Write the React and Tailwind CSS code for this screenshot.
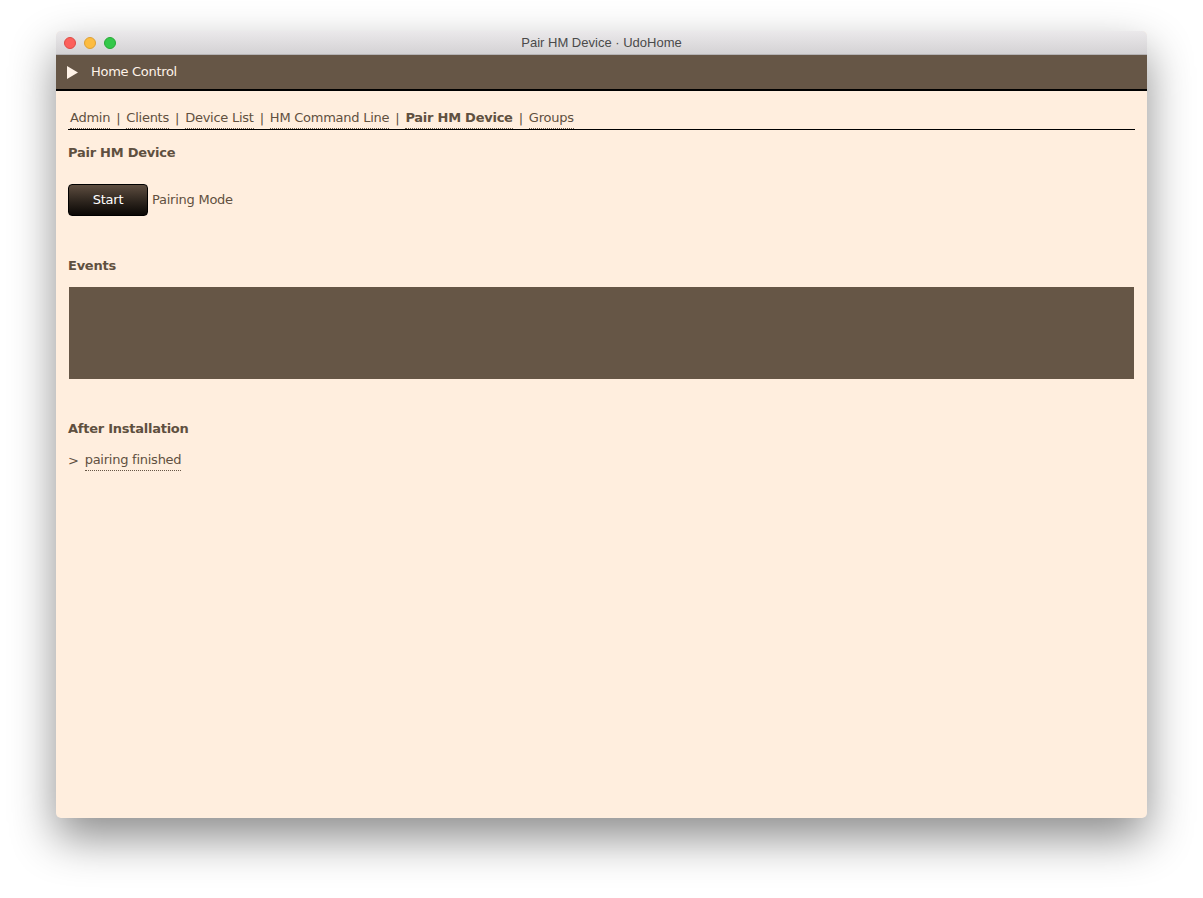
import React from 'react';

const font = { fontFamily: '"DejaVu Sans", Verdana, sans-serif' };

function NavLink({ children, active }) {
  return (
    <span className={`border-b border-dotted border-[#665646] ${active ? 'font-bold' : ''}`}>
      {children}
    </span>
  );
}

export default function App() {
  const links = ['Admin', 'Clients', 'Device List', 'HM Command Line', 'Pair HM Device', 'Groups'];

  return (
    <div className="w-[1203px] h-[898px] bg-white pt-[31px] pl-[56px]">
      <div className="w-[1091px] h-[787px] flex flex-col bg-[#ffeede] rounded-[5px] overflow-hidden shadow-[0_20px_45px_rgba(0,0,0,0.45)]">
        {/* title bar */}
        <div className="relative h-[24px] flex items-center bg-gradient-to-b from-[#ebe9eb] to-[#d4d2d4] border-b border-[#b5b3b5]">
          <div className="flex items-center gap-[8px] pl-[8px]">
            <span className="w-[12px] h-[12px] rounded-full bg-[#fc605b] border border-[#de4a45]" />
            <span className="w-[12px] h-[12px] rounded-full bg-[#fdbc40] border border-[#dea034]" />
            <span className="w-[12px] h-[12px] rounded-full bg-[#34c84a] border border-[#27aa35]" />
          </div>
          <div className="absolute inset-0 flex items-center justify-center text-[13px] text-[#4a4a4a]" style={{ fontFamily: '"Liberation Sans", Arial, sans-serif' }}>
            Pair HM Device · UdoHome
          </div>
        </div>

        {/* header */}
        <div className="h-[36px] flex items-center gap-[13px] pl-[11px] bg-[#665646] border-b-2 border-black" style={font}>
          <svg width="11" height="13" viewBox="0 0 11 13">
            <polygon points="0,0 11,6.5 0,13" fill="#fff3e8" />
          </svg>
          <span className="text-[13px] text-[#fff3e8] tracking-[-0.3px]">Home Control</span>
        </div>

        {/* content */}
        <div className="flex flex-col px-[12px] text-[#5f5040] text-[13px] tracking-[-0.25px]" style={font}>
          <div className="flex items-center gap-[6px] pt-[17px] pl-[2px] border-b border-black">
            {links.map((l, i) => (
              <React.Fragment key={l}>
                {i > 0 && <span>|</span>}
                <NavLink active={l === 'Pair HM Device'}>{l}</NavLink>
              </React.Fragment>
            ))}
          </div>

          <div className="font-bold mt-[13px]">Pair HM Device</div>

          <div className="flex items-center gap-[4px] mt-[22px]">
            <button className="w-[80px] h-[32px] rounded-[4px] bg-gradient-to-b from-[#5e4e40] to-[#0b0806] text-white text-[13px] border border-black" style={font}>
              Start
            </button>
            <span>Pairing Mode</span>
          </div>

          <div className="font-bold mt-[40px]">Events</div>
          <div className="h-[92px] ml-[1px] mr-[1px] mt-[11px] bg-[#665646]" />

          <div className="font-bold mt-[40px]">After Installation</div>
          <div className="flex items-center gap-[6px] mt-[12px]">
            <span>&gt;</span>
            <NavLink>pairing finished</NavLink>
          </div>
        </div>
      </div>
    </div>
  );
}
